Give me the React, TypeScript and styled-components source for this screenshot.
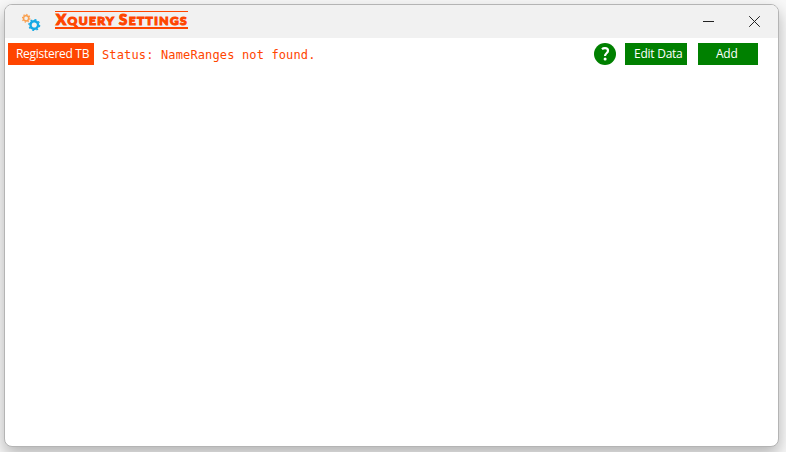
import React from "react";
import styled, { createGlobalStyle } from "styled-components";

const GlobalStyle = createGlobalStyle`
  * { box-sizing: border-box; }
  body { margin: 0; background: #f8f8f8; overflow: hidden; }
`;

const Desktop = styled.div`
  width: 786px;
  height: 452px;
  padding: 4px 7px 5px 4px;
  overflow: hidden;
  font-family: "Open Sans", "Noto Sans", sans-serif;
`;

const Window = styled.main`
  display: flex;
  flex-direction: column;
  width: 775px;
  height: 443px;
  border: 1px solid #b4b4b4;
  border-radius: 8px;
  background: #fff;
  overflow: hidden;
  box-shadow: 0 7px 16px rgba(0, 0, 0, 0.28);
`;

const TitleBar = styled.header`
  display: flex;
  align-items: flex-start;
  height: 33px;
  flex: none;
  background: #f1f1f1;
`;

const Gears = styled.svg`
  width: 20px;
  height: 20px;
  margin: 8px 0 0 17px;
`;

const Title = styled.h1`
  width: 133px;
  height: 18px;
  margin: 6px 0 0 13px;
  padding-left: 1px;
  border-top: 1px solid #ff4500;
  border-bottom: 2px solid #ff4500;
  color: #ff4500;
  font: 900 12px/17px Lato, sans-serif;
  text-transform: uppercase;
  letter-spacing: 1.38px;
  white-space: nowrap;
  -webkit-text-stroke: 1.1px #ff4500;
`;

const Initial = styled.span`
  font-size: 15px;
  line-height: 15px;
`;

const WindowControls = styled.div`
  display: flex;
  gap: 34px;
  margin: 10px 17px 0 auto;
`;

const ControlIcon = styled.svg`
  width: 12px;
  height: 12px;
  fill: none;
  stroke: #222;
  stroke-width: 1;
`;

const Toolbar = styled.div`
  display: flex;
  align-items: flex-start;
  padding: 5px 20px 0 3px;
`;

const Label = styled.div`
  width: 86px;
  height: 22px;
  padding-left: 8px;
  background: #ff4500;
  color: #fff;
  font-size: 12px;
  line-height: 21px;
  letter-spacing: -0.29px;
  white-space: nowrap;
`;

const Status = styled.div`
  margin-left: 8px;
  color: #ff4500;
  font: 12px/24px "DejaVu Sans Mono", monospace;
  letter-spacing: 0.14px;
  white-space: pre;
`;

const HelpIcon = styled.svg`
  width: 22px;
  height: 22px;
  margin-left: auto;
`;

const Button = styled.button<{ $width: number; $gap: number; $inset: number }>`
  width: ${({ $width }) => $width}px;
  height: 22px;
  margin: 0 0 0 ${({ $gap }) => $gap}px;
  padding: 0 0 1px ${({ $inset }) => $inset}px;
  border: 0;
  background: #008000;
  color: #fff;
  font: 12px/21px "Open Sans", "Noto Sans", sans-serif;
  letter-spacing: -0.25px;
  text-align: left;
  white-space: nowrap;
`;

const TEETH = [0, 45, 90, 135, 180, 225, 270, 315];

function Gear({ x, y, r, width, color }: { x: number; y: number; r: number; width: number; color: string }) {
  return (
    <g transform={`translate(${x} ${y}) rotate(12)`} stroke={color} fill="none">
      <circle r={r} strokeWidth={width} />
      {TEETH.map((angle) => (
        <path key={angle} d={`M0 ${-r - width / 2 + 0.3}v-1.3`} strokeWidth={width * 0.85} transform={`rotate(${angle})`} />
      ))}
    </g>
  );
}

export default function App() {
  return (
    <>
      <GlobalStyle />
      <Desktop>
        <Window>
          <TitleBar>
            <Gears viewBox="0 0 20 20" aria-hidden="true">
              <Gear x={4.1} y={5.3} r={2.6} width={1.6} color="#f9a050" />
              <Gear x={12.3} y={12} r={3.8} width={2.4} color="#12a8e4" />
            </Gears>
            <Title><Initial>X</Initial>query <Initial>S</Initial>ettings</Title>
            <WindowControls>
              <ControlIcon viewBox="0 0 12 12" aria-label="Minimize"><path d="M0 6.5h11" /></ControlIcon>
              <ControlIcon viewBox="0 0 12 12" aria-label="Close"><path d="m.2 1.2 10.6 10.6M10.8 1.2.2 11.8" /></ControlIcon>
            </WindowControls>
          </TitleBar>
          <Toolbar>
            <Label>Registered TB</Label>
            <Status>Status: NameRanges not found.</Status>
            <HelpIcon viewBox="0 0 22 22" aria-label="Help">
              <circle cx="11" cy="11" r="11" fill="#008000" />
              <path d="M8 6.2C8.7 5.5 9.7 5.2 11 5.2c2 0 3 1 3 2.5 0 2.6-3 2.5-3 5.2" fill="none" stroke="#fff" strokeWidth="2.2" />
              <circle cx="11.1" cy="16.1" r="1.5" fill="#fff" />
            </HelpIcon>
            <Button $width={62} $gap={9} $inset={9}>Edit Data</Button>
            <Button $width={60} $gap={11} $inset={18}>Add</Button>
          </Toolbar>
        </Window>
      </Desktop>
    </>
  );
}
